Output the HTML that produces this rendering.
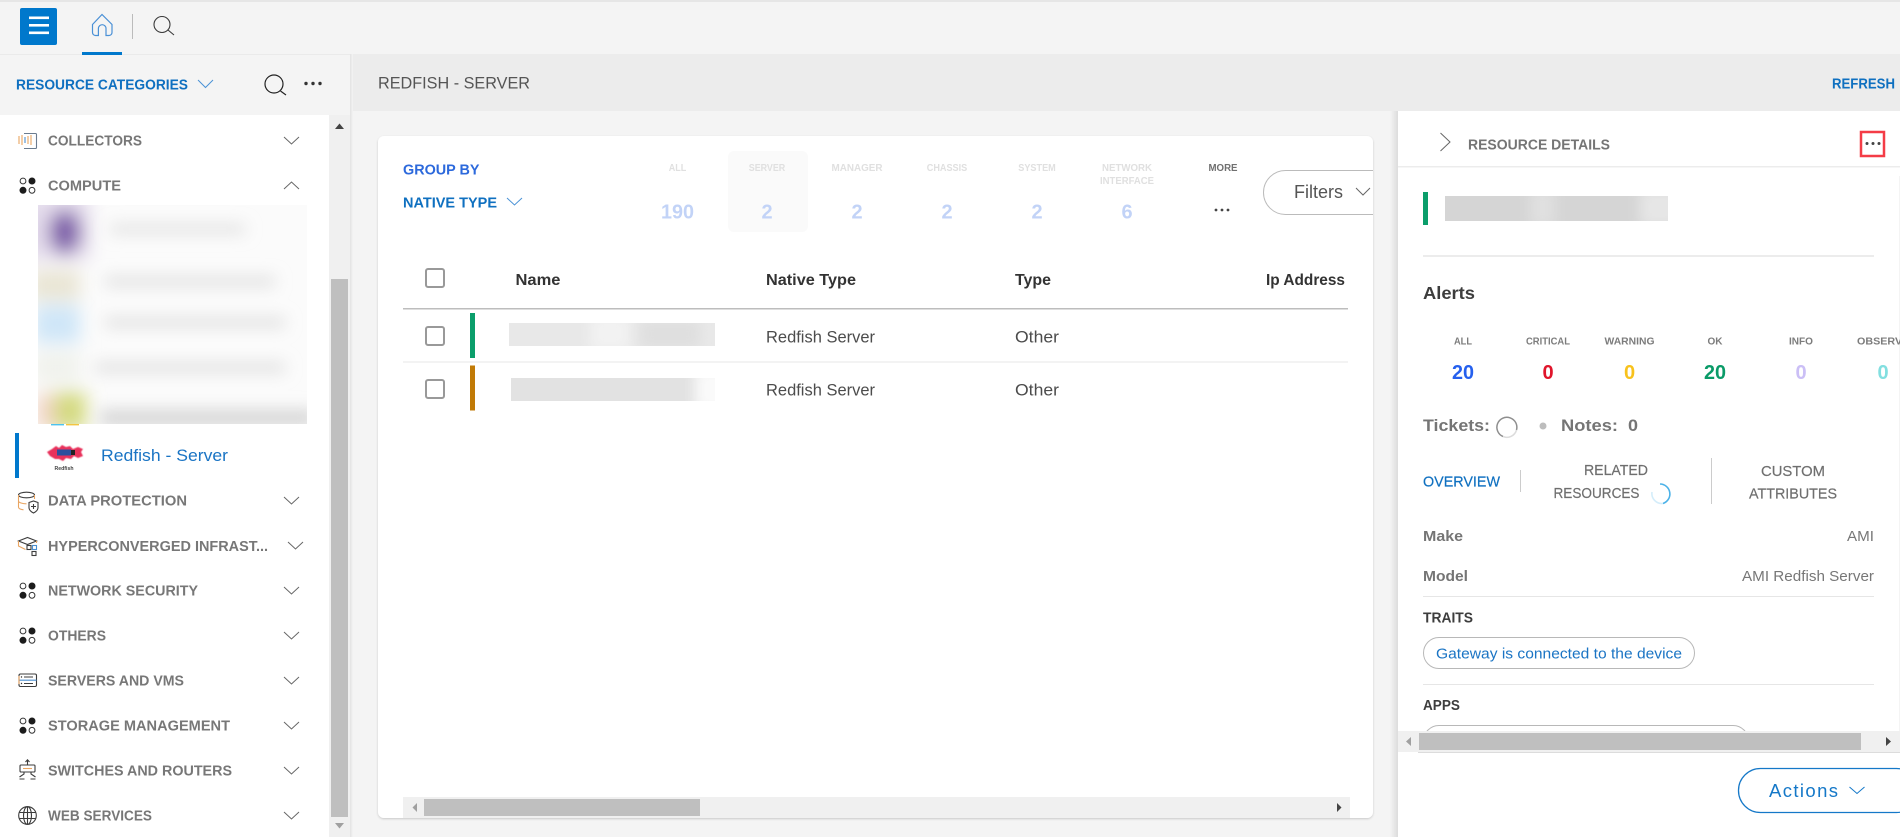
<!DOCTYPE html>
<html lang="en">
<head>
<meta charset="utf-8">
<title>Redfish - Server</title>
<style>
html,body{margin:0;padding:0;width:1900px;height:837px;overflow:hidden;background:#f4f4f4}
svg{display:block;font-family:"Liberation Sans",Arial,sans-serif}
.b{font-weight:700}
.nav{font-weight:700;font-size:14.5px;fill:#777}
.lab{font-weight:700;font-size:10.5px;fill:#e0e0e0;text-anchor:middle}
.num{font-weight:700;font-size:20px;text-anchor:middle}
.al{font-weight:700;font-size:10.5px;fill:#7c7c7c;text-anchor:middle}
.th{font-weight:700;font-size:15.5px;fill:#333}
.td{font-size:16.5px;fill:#4c4c4c}
.ch{fill:none;stroke:#666;stroke-width:1}
.cb{fill:none;stroke:#4a92d6;stroke-width:1}
.ic{fill:none;stroke:#3c3c3c;stroke-width:1.1}
.io{fill:none;stroke:#e9a561;stroke-width:1.1}
.il{fill:none;stroke:#4b8fd0;stroke-width:1.1}
.box{fill:#fff;stroke:#999;stroke-width:2}
</style>
</head>
<body>
<svg width="1900" height="837" viewBox="0 0 1900 837" xmlns="http://www.w3.org/2000/svg">
<defs>
<filter id="bl" x="-30%" y="-30%" width="160%" height="160%"><feGaussianBlur stdDeviation="9"/></filter>
<filter id="bs" x="-20%" y="-100%" width="140%" height="300%"><feGaussianBlur stdDeviation="8"/></filter>
<filter id="bf" x="-50%" y="-50%" width="200%" height="200%"><feGaussianBlur stdDeviation="6"/></filter>
<filter id="fx" x="-10%" y="-10%" width="120%" height="120%"><feGaussianBlur stdDeviation=".6"/></filter>
<filter id="cs" x="-2%" y="-2%" width="104%" height="104%"><feDropShadow dx="0" dy="1" stdDeviation="1" flood-color="#000" flood-opacity=".18"/></filter>
<linearGradient id="ps" x1="0" x2="1" y1="0" y2="0"><stop offset="0" stop-color="#f4f4f4"/><stop offset="1" stop-color="#dcdcdc"/></linearGradient>
<linearGradient id="ss" x1="0" x2="1" y1="0" y2="0"><stop offset="0" stop-color="#e2e2e2"/><stop offset="1" stop-color="#f4f4f4"/></linearGradient>
<clipPath id="cBlur"><rect x="38" y="205" width="269" height="219"/></clipPath>
<clipPath id="cCard"><rect x="378" y="136" width="995" height="682" rx="6"/></clipPath>
<clipPath id="cPanel"><rect x="1398" y="111" width="502" height="620"/></clipPath>
<clipPath id="r1"><rect x="509" y="323" width="206" height="23"/></clipPath>
<clipPath id="r2"><rect x="511" y="378" width="204" height="23"/></clipPath>
<clipPath id="r3"><rect x="1445" y="196" width="223" height="25"/></clipPath>
<g id="dots4"><circle cx="23" cy="-4" r="2.9" fill="#fff" stroke="#333" stroke-width="1"/><circle cx="32" cy="-4" r="3.5" fill="#1c1c1c"/><circle cx="23" cy="5.3" r="3.5" fill="#1c1c1c"/><circle cx="32" cy="5.3" r="2.9" fill="#fff" stroke="#333" stroke-width="1"/></g>
<polyline id="cd" class="ch" points="0,0 7.5,7 15,0"/>
</defs>

<!-- backgrounds -->
<rect width="1900" height="837" fill="#f4f4f4"/>
<rect width="1900" height="2" fill="#e6e6e6"/>
<rect y="54" width="1900" height="1" fill="#eaeaea"/>
<rect x="353" y="54" width="1547" height="57" fill="#ececec"/>
<rect x="350" y="54" width="3" height="783" fill="url(#ss)"/>

<!-- top bar -->
<rect x="20" y="8" width="37" height="37" rx="2" fill="#0078cc"/>
<rect x="29" y="16.5" width="20" height="2.6" fill="#fff"/>
<rect x="29" y="24" width="20" height="2.6" fill="#fff"/>
<rect x="29" y="31.5" width="20" height="2.6" fill="#fff"/>
<path d="M92.5 24.5 L102 14.5 L112 24.5 V32.5 a3 3 0 0 1-3 3 H106 V28.5 a3.8 3.8 0 0 0-7.6 0 V35.5 H95.5 a3 3 0 0 1-3-3 Z" fill="none" stroke="#4a90d6" stroke-width="1.2"/>
<rect x="82" y="52" width="40" height="3" fill="#0078cc"/>
<rect x="132" y="14" width="1" height="25" fill="#bbb"/>
<circle cx="162" cy="24.5" r="8" fill="none" stroke="#3a3a3a" stroke-width="1.1"/>
<line x1="168" y1="30" x2="174" y2="35" stroke="#3a3a3a" stroke-width="1.1"/>

<!-- left header -->
<text x="16" y="89.5" class="b" font-size="14.5" fill="#0f70c0" textLength="172" lengthAdjust="spacingAndGlyphs">RESOURCE CATEGORIES</text>
<polyline class="cb" points="198,80 205.5,87.5 213,80"/>
<circle cx="274" cy="84" r="9" fill="none" stroke="#222" stroke-width="1.2"/>
<line x1="280.5" y1="91" x2="286" y2="95" stroke="#222" stroke-width="1.2"/>
<circle cx="306" cy="83.5" r="1.7" fill="#333"/><circle cx="313" cy="83.5" r="1.7" fill="#333"/><circle cx="320" cy="83.5" r="1.7" fill="#333"/>

<!-- sidebar -->
<rect x="0" y="115" width="329" height="722" fill="#fff"/>
<rect x="329" y="115" width="21" height="722" fill="#f0f0f0"/>
<rect x="331" y="279" width="17" height="538" fill="#bfbfbf"/>
<path d="M335 129 L339.5 123.5 L344 129 Z" fill="#444"/>
<path d="M335 823 L339.5 828.5 L344 823 Z" fill="#a0a0a0"/>

<!-- collectors -->
<g>
<path d="M19 136v8M22 135v10M28 136v8M31 135v10" class="io" stroke-width="1.4"/>
<path d="M25 137v6" class="il" stroke-width="1.4"/>
<path d="M24 133.5h11.5a1 1 0 0 1 1 1v13a1 1 0 0 1-1 1H24" fill="none" stroke="#6b7c8f" stroke-width="1.1"/>
</g>
<text x="48" y="145.5" class="nav" textLength="94" lengthAdjust="spacingAndGlyphs">COLLECTORS</text>
<use href="#cd" x="284" y="137"/>

<!-- compute -->
<use href="#dots4" y="185"/>
<text x="48" y="190.5" class="nav" textLength="73" lengthAdjust="spacingAndGlyphs">COMPUTE</text>
<polyline class="ch" points="284,189 291.5,182 299,189"/>

<!-- blurred children -->
<g clip-path="url(#cBlur)">
<rect x="38" y="205" width="269" height="219" fill="#fbfbfb"/>
<g filter="url(#bl)">
<rect x="20" y="195" width="70" height="65" fill="#e4dcec"/>
<ellipse cx="65" cy="232" rx="16" ry="22" fill="#7b5ca8"/>
<rect x="30" y="270" width="50" height="30" fill="#e9e5d4"/>
<rect x="34" y="305" width="46" height="38" fill="#cfe6f8"/>
<rect x="34" y="352" width="46" height="30" fill="#f0f2ec"/>
<rect x="36" y="394" width="20" height="36" fill="#f3d5c8"/>
<rect x="54" y="392" width="32" height="38" fill="#d4da80"/>
</g>
<g filter="url(#bs)" fill="#dcdcdc">
<rect x="110" y="225" width="135" height="8"/>
<rect x="105" y="277" width="170" height="9"/>
<rect x="105" y="318" width="180" height="9"/>
<rect x="95" y="363" width="190" height="9"/>
<rect x="100" y="410" width="215" height="16" fill="#d4d4d4"/>
</g>
</g>
<rect x="51" y="424" width="13" height="1.4" fill="#4dc3ee"/><rect x="66" y="424" width="13" height="1.4" fill="#f3c542"/>

<!-- redfish -->
<rect x="15" y="433" width="4" height="45" fill="#0078cc"/>
<g filter="url(#fx)">
<path d="M47 452 L52 449 L56 446 L59 448 L62 445 L66 447 L70 446 L73 449 L78 447 L83 449 L81 452 L83 456 L78 458 L74 456 L71 459 L66 458 L63 461 L59 459 L55 459 L50 456 Z" fill="#e8335c"/>
</g>
<rect x="57" y="449.500" width="14" height="6" fill="#2d4f9e"/>
<rect x="71" y="450" width="4" height="5" fill="#222"/>
<text x="54.500" y="470" font-size="5.5" font-weight="700" fill="#444" textLength="19" lengthAdjust="spacingAndGlyphs">Redfish</text>
<text x="101" y="461" font-size="17" fill="#1a74c4" textLength="127" lengthAdjust="spacingAndGlyphs">Redfish - Server</text>

<!-- data protection -->
<g>
<ellipse cx="26.5" cy="495" rx="8" ry="2.8" class="ic"/>
<path d="M18.5 495v12c0 1.5 2.5 2.5 5 2.8M18.5 501c0 1.5 4 2.8 8 2.8M34.5 495v4" class="io"/>
<path d="M29 502.5l4.5-1.5 4.5 1.500v5c0 3-2.500 4.500-4.500 5.500-2-1-4.500-2.500-4.500-5.500z" class="ic"/>
<path d="M33.500 504v5M31 506.500h5" class="ic"/>
</g>
<text x="48" y="505.5" class="nav" textLength="139" lengthAdjust="spacingAndGlyphs">DATA PROTECTION</text>
<use href="#cd" x="284" y="497"/>

<!-- hyperconverged -->
<g>
<path d="M18.500 541l9-3.500 9 3.500-9 3.500z" class="ic"/>
<path d="M18.500 541v5l7 3.500M36.500 541v2" class="io"/>
<rect x="27" y="545.500" width="4" height="4" class="ic"/><rect x="32.500" y="545.500" width="4" height="4" class="il"/><rect x="32" y="551.500" width="4" height="4" class="ic"/>
</g>
<text x="48" y="551" class="nav" textLength="220" lengthAdjust="spacingAndGlyphs">HYPERCONVERGED INFRAST...</text>
<use href="#cd" x="288" y="542"/>

<use href="#dots4" y="590"/>
<text x="48" y="595.5" class="nav" textLength="150" lengthAdjust="spacingAndGlyphs">NETWORK SECURITY</text>
<use href="#cd" x="284" y="587"/>

<use href="#dots4" y="635"/>
<text x="48" y="640.5" class="nav" textLength="58" lengthAdjust="spacingAndGlyphs">OTHERS</text>
<use href="#cd" x="284" y="632"/>

<!-- servers -->
<g>
<rect x="19" y="674" width="17.500" height="12.500" rx="1.500" class="ic"/>
<path d="M19 680.200h17.500" class="il"/>
<path d="M19 676v8" class="io"/>
<path d="M24 677h9M24 683.500h9" class="ic"/>
<circle cx="21.500" cy="677" r=".7" fill="#333"/><circle cx="21.500" cy="683.500" r=".7" fill="#333"/>
</g>
<text x="48" y="685.5" class="nav" textLength="136" lengthAdjust="spacingAndGlyphs">SERVERS AND VMS</text>
<use href="#cd" x="284" y="677"/>

<use href="#dots4" y="725"/>
<text x="48" y="730.5" class="nav" textLength="182" lengthAdjust="spacingAndGlyphs">STORAGE MANAGEMENT</text>
<use href="#cd" x="284" y="722"/>

<!-- switches -->
<g>
<rect x="20" y="765" width="15" height="7" rx="1" class="ic"/>
<path d="M27.500 765v-5M25.500 762l2-2.200 2 2.200" class="ic"/>
<path d="M24 772v2l-4.500 3M31 772v2l4.500 3M19.500 779h5M30.500 779h5" class="ic"/>
<path d="M23 768.500h9" class="io"/>
</g>
<text x="48" y="775.5" class="nav" textLength="184" lengthAdjust="spacingAndGlyphs">SWITCHES AND ROUTERS</text>
<use href="#cd" x="284" y="767"/>

<!-- web -->
<g class="ic">
<circle cx="27.500" cy="815.500" r="8.800"/>
<ellipse cx="27.500" cy="815.500" rx="4" ry="8.800"/>
<path d="M19 812.500h17M19 818.500h17M27.500 807v17"/>
</g>
<text x="48" y="820.5" class="nav" textLength="104" lengthAdjust="spacingAndGlyphs">WEB SERVICES</text>
<use href="#cd" x="284" y="812"/>

<!-- main header -->
<text x="378" y="88.5" font-size="16.5" fill="#555" textLength="152" lengthAdjust="spacingAndGlyphs">REDFISH - SERVER</text>
<text x="1832" y="88.5" class="b" font-size="14.5" fill="#0f70c0" textLength="63" lengthAdjust="spacingAndGlyphs">REFRESH</text>

<!-- card -->
<rect x="378" y="136" width="995" height="682" rx="6" fill="#fff" filter="url(#cs)"/>
<g clip-path="url(#cCard)">
<text x="403" y="174.5" class="b" font-size="14.5" fill="#2c69dc" textLength="76.5" lengthAdjust="spacingAndGlyphs">GROUP BY</text>
<text x="403" y="207.5" class="b" font-size="14.5" fill="#0f70c0" textLength="94" lengthAdjust="spacingAndGlyphs">NATIVE TYPE</text>
<polyline class="cb" points="507,198 514.5,205 522,198"/>

<rect x="728" y="151" width="80" height="81" rx="6" fill="#fafafa"/>
<text x="677.5" y="171" class="lab" textLength="17.5" lengthAdjust="spacingAndGlyphs">ALL</text>
<text x="767" y="171" class="lab" textLength="36.5" lengthAdjust="spacingAndGlyphs">SERVER</text>
<text x="857" y="171" class="lab" textLength="51" lengthAdjust="spacingAndGlyphs">MANAGER</text>
<text x="947" y="171" class="lab" textLength="40.5" lengthAdjust="spacingAndGlyphs">CHASSIS</text>
<text x="1037" y="171" class="lab" textLength="37.5" lengthAdjust="spacingAndGlyphs">SYSTEM</text>
<text x="1127" y="171" class="lab" textLength="50" lengthAdjust="spacingAndGlyphs">NETWORK</text>
<text x="1127" y="184" class="lab" textLength="54" lengthAdjust="spacingAndGlyphs">INTERFACE</text>
<text x="1223" y="171" class="lab" style="fill:#707070" textLength="29" lengthAdjust="spacingAndGlyphs">MORE</text>
<text x="677.5" y="218.5" class="num" fill="#c2d3f7" textLength="33" lengthAdjust="spacingAndGlyphs">190</text>
<text x="767" y="218.5" class="num" fill="#c2d3f7">2</text>
<text x="857" y="218.5" class="num" fill="#c2d3f7">2</text>
<text x="947" y="218.5" class="num" fill="#c2d3f7">2</text>
<text x="1037" y="218.5" class="num" fill="#c2d3f7">2</text>
<text x="1127" y="218.5" class="num" fill="#c2d3f7">6</text>
<circle cx="1216" cy="210" r="1.4" fill="#444"/><circle cx="1222" cy="210" r="1.4" fill="#444"/><circle cx="1228" cy="210" r="1.4" fill="#444"/>

<rect x="1263.5" y="170.5" width="200" height="44" rx="22" fill="#fff" stroke="#bbb" stroke-width="1"/>
<text x="1294" y="198" font-size="18.5" fill="#555" textLength="49" lengthAdjust="spacingAndGlyphs">Filters</text>
<polyline class="ch" points="1356,188 1363,195 1370,188"/>

<rect x="426" y="269" width="18" height="18" rx="2" class="box"/>
<text x="515.5" y="285" class="th" textLength="45" lengthAdjust="spacingAndGlyphs">Name</text>
<text x="766" y="285" class="th" textLength="90" lengthAdjust="spacingAndGlyphs">Native Type</text>
<text x="1015" y="285" class="th" textLength="36" lengthAdjust="spacingAndGlyphs">Type</text>
<text x="1266" y="285" class="th" textLength="79" lengthAdjust="spacingAndGlyphs">Ip Address</text>
<rect x="403" y="308" width="945" height="1.5" fill="#bdbdbd"/>

<rect x="426" y="327" width="18" height="18" rx="2" class="box"/>
<rect x="470" y="313" width="5" height="45" fill="#0b9e6b"/>
<rect x="509" y="323" width="206" height="23" fill="#e8e8e8"/>
<g clip-path="url(#r1)"><rect x="590" y="315" width="40" height="36" fill="#f2f2f2" filter="url(#bf)"/><rect x="640" y="320" width="60" height="28" fill="#dfdfdf" filter="url(#bf)"/></g>
<text x="766" y="342.5" class="td" textLength="109" lengthAdjust="spacingAndGlyphs">Redfish Server</text>
<text x="1015" y="342.5" class="td" textLength="44" lengthAdjust="spacingAndGlyphs">Other</text>
<rect x="403" y="361" width="945" height="2" fill="#f3f3f3"/>

<rect x="426" y="380" width="18" height="18" rx="2" class="box"/>
<rect x="470" y="365.5" width="5" height="45" fill="#c17a06"/>
<rect x="511" y="378" width="204" height="23" fill="#e2e2e2"/>
<g clip-path="url(#r2)"><rect x="695" y="370" width="40" height="40" fill="#fafafa" filter="url(#bf)"/></g>
<text x="766" y="395.5" class="td" textLength="109" lengthAdjust="spacingAndGlyphs">Redfish Server</text>
<text x="1015" y="395.5" class="td" textLength="44" lengthAdjust="spacingAndGlyphs">Other</text>

<rect x="403" y="797" width="947" height="21" fill="#f0f0f0"/>
<rect x="424" y="799" width="276" height="17" fill="#bfbfbf"/>
<path d="M417 803 L412.5 807.5 L417 812 Z" fill="#a0a0a0"/>
<path d="M1337 803 L1341.5 807.5 L1337 812 Z" fill="#444"/>
</g>

<!-- right panel -->
<rect x="1390" y="111" width="8" height="726" fill="url(#ps)"/>
<rect x="1398" y="111" width="502" height="726" fill="#fff"/>
<polyline class="ch" points="1440.5,133 1450,142 1440.5,151" style="stroke:#666"/>
<text x="1468" y="149.5" class="b" font-size="14.5" fill="#757575" textLength="142" lengthAdjust="spacingAndGlyphs">RESOURCE DETAILS</text>
<rect x="1861" y="132" width="23" height="24" fill="none" stroke="#f43c46" stroke-width="2.5"/>
<circle cx="1867" cy="143.5" r="1.5" fill="#444"/><circle cx="1873" cy="143.5" r="1.5" fill="#444"/><circle cx="1879" cy="143.5" r="1.5" fill="#444"/>
<rect x="1398" y="166" width="502" height="1.5" fill="#ececec"/>
<rect x="1899" y="176" width="1" height="555" fill="#f4f4f4"/>

<g clip-path="url(#cPanel)">
<rect x="1423" y="192" width="5" height="33" fill="#0b9e6b"/>
<rect x="1445" y="196" width="223" height="25" fill="#d5d5d5"/>
<g clip-path="url(#r3)"><rect x="1530" y="190" width="25" height="36" fill="#e0e0e0" filter="url(#bf)"/><rect x="1640" y="190" width="40" height="36" fill="#e6e6e6" filter="url(#bf)"/></g>
<rect x="1423" y="255" width="451" height="2" fill="#ececec"/>

<text x="1423" y="299" class="b" font-size="17.5" fill="#3d3d3d" textLength="52" lengthAdjust="spacingAndGlyphs">Alerts</text>

<text x="1463" y="344.5" class="al" textLength="18" lengthAdjust="spacingAndGlyphs">ALL</text>
<text x="1548" y="344.5" class="al" textLength="44" lengthAdjust="spacingAndGlyphs">CRITICAL</text>
<text x="1629.5" y="344.5" class="al" textLength="50" lengthAdjust="spacingAndGlyphs">WARNING</text>
<text x="1715" y="344.5" class="al" textLength="15" lengthAdjust="spacingAndGlyphs">OK</text>
<text x="1801" y="344.5" class="al" textLength="24" lengthAdjust="spacingAndGlyphs">INFO</text>
<text x="1887" y="344.5" class="al" textLength="60" lengthAdjust="spacingAndGlyphs">OBSERVED</text>
<text x="1463" y="379" class="num" fill="#2560ee" textLength="22" lengthAdjust="spacingAndGlyphs">20</text>
<text x="1548" y="379" class="num" fill="#e0152b">0</text>
<text x="1629.5" y="379" class="num" fill="#f8c21c">0</text>
<text x="1715" y="379" class="num" fill="#0a9b68" textLength="22" lengthAdjust="spacingAndGlyphs">20</text>
<text x="1801" y="379" class="num" fill="#cbbff6">0</text>
<text x="1883" y="379" class="num" fill="#82dfe0">0</text>

<text x="1423" y="431" class="b" font-size="17" fill="#757575" textLength="67" lengthAdjust="spacingAndGlyphs">Tickets:</text>
<path d="M1503 436.5 A10 10 0 1 1 1516.500 430" fill="none" stroke="#8e8e8e" stroke-width="1.5"/>
<path d="M1516.500 430 A10 10 0 0 1 1503 436.500" fill="none" stroke="#dcdcdc" stroke-width="1.5"/>
<circle cx="1543" cy="426" r="3.5" fill="#bdbdbd"/>
<text x="1561" y="431" class="b" font-size="17" fill="#757575" textLength="57" lengthAdjust="spacingAndGlyphs">Notes:</text>
<text x="1628" y="431" class="b" font-size="17" fill="#757575" textLength="10" lengthAdjust="spacingAndGlyphs">0</text>

<text x="1423" y="486.5" font-size="15" fill="#0f70c0" stroke="#0f70c0" stroke-width=".2" textLength="77" lengthAdjust="spacingAndGlyphs">OVERVIEW</text>
<rect x="1520" y="470" width="1" height="22" fill="#ccc"/>
<text x="1584" y="475" font-size="15" fill="#6f6f6f" stroke="#6f6f6f" stroke-width=".2" textLength="64" lengthAdjust="spacingAndGlyphs">RELATED</text>
<text x="1553.5" y="498" font-size="15" fill="#6f6f6f" stroke="#6f6f6f" stroke-width=".2" textLength="86" lengthAdjust="spacingAndGlyphs">RESOURCES</text>
<path d="M1660 484 A10 10 0 0 1 1663 503.5" fill="none" stroke="#4cb2e8" stroke-width="1.6"/>
<path d="M1663 503.5 A10 10 0 0 1 1652 492" fill="none" stroke="#d4edfa" stroke-width="1.6"/>
<rect x="1711" y="458" width="1" height="46" fill="#ccc"/>
<text x="1761" y="476" font-size="15" fill="#6f6f6f" stroke="#6f6f6f" stroke-width=".2" textLength="64" lengthAdjust="spacingAndGlyphs">CUSTOM</text>
<text x="1749" y="498.5" font-size="15" fill="#6f6f6f" stroke="#6f6f6f" stroke-width=".2" textLength="88" lengthAdjust="spacingAndGlyphs">ATTRIBUTES</text>

<text x="1423" y="541" class="b" font-size="15" fill="#757575" textLength="40" lengthAdjust="spacingAndGlyphs">Make</text>
<text x="1847" y="541" font-size="15" fill="#777" textLength="27" lengthAdjust="spacingAndGlyphs">AMI</text>
<text x="1423" y="581" class="b" font-size="15" fill="#757575" textLength="45" lengthAdjust="spacingAndGlyphs">Model</text>
<text x="1742" y="581" font-size="15" fill="#777" textLength="132" lengthAdjust="spacingAndGlyphs">AMI Redfish Server</text>
<rect x="1423" y="596" width="451" height="1" fill="#e6e6e6"/>
<text x="1423" y="622.5" class="b" font-size="14.5" fill="#3d3d3d" textLength="50" lengthAdjust="spacingAndGlyphs">TRAITS</text>
<rect x="1423.5" y="637.5" width="271" height="31" rx="15.5" fill="#fff" stroke="#b8b8b8"/>
<text x="1436" y="658.5" font-size="15" fill="#1a74c4" textLength="246" lengthAdjust="spacingAndGlyphs">Gateway is connected to the device</text>
<rect x="1423" y="684" width="451" height="1" fill="#e6e6e6"/>
<text x="1423" y="710" class="b" font-size="14.5" fill="#3d3d3d" textLength="37" lengthAdjust="spacingAndGlyphs">APPS</text>
<rect x="1423.5" y="725.5" width="325" height="31" rx="15.5" fill="#fff" stroke="#b8b8b8"/>
</g>

<rect x="1398" y="731" width="502" height="21" fill="#f0f0f0"/>
<rect x="1419" y="733" width="442" height="17" fill="#bfbfbf"/>
<path d="M1411 737 L1406 741.5 L1411 746 Z" fill="#a0a0a0"/>
<path d="M1886 737 L1891 741.5 L1886 746 Z" fill="#444"/>
<rect x="1418" y="752" width="482" height="1" fill="#dcdcdc"/>

<rect x="1738.5" y="768.5" width="180" height="44" rx="22" fill="#fff" stroke="#1578c8" stroke-width="1.3"/>
<text x="1769" y="797" font-size="18.5" fill="#1578c8" textLength="69" lengthAdjust="spacing">Actions</text>
<polyline class="cb" style="stroke:#1578c8" points="1849.5,787 1857,793.5 1864.5,787"/>
</svg>
</body>
</html>
